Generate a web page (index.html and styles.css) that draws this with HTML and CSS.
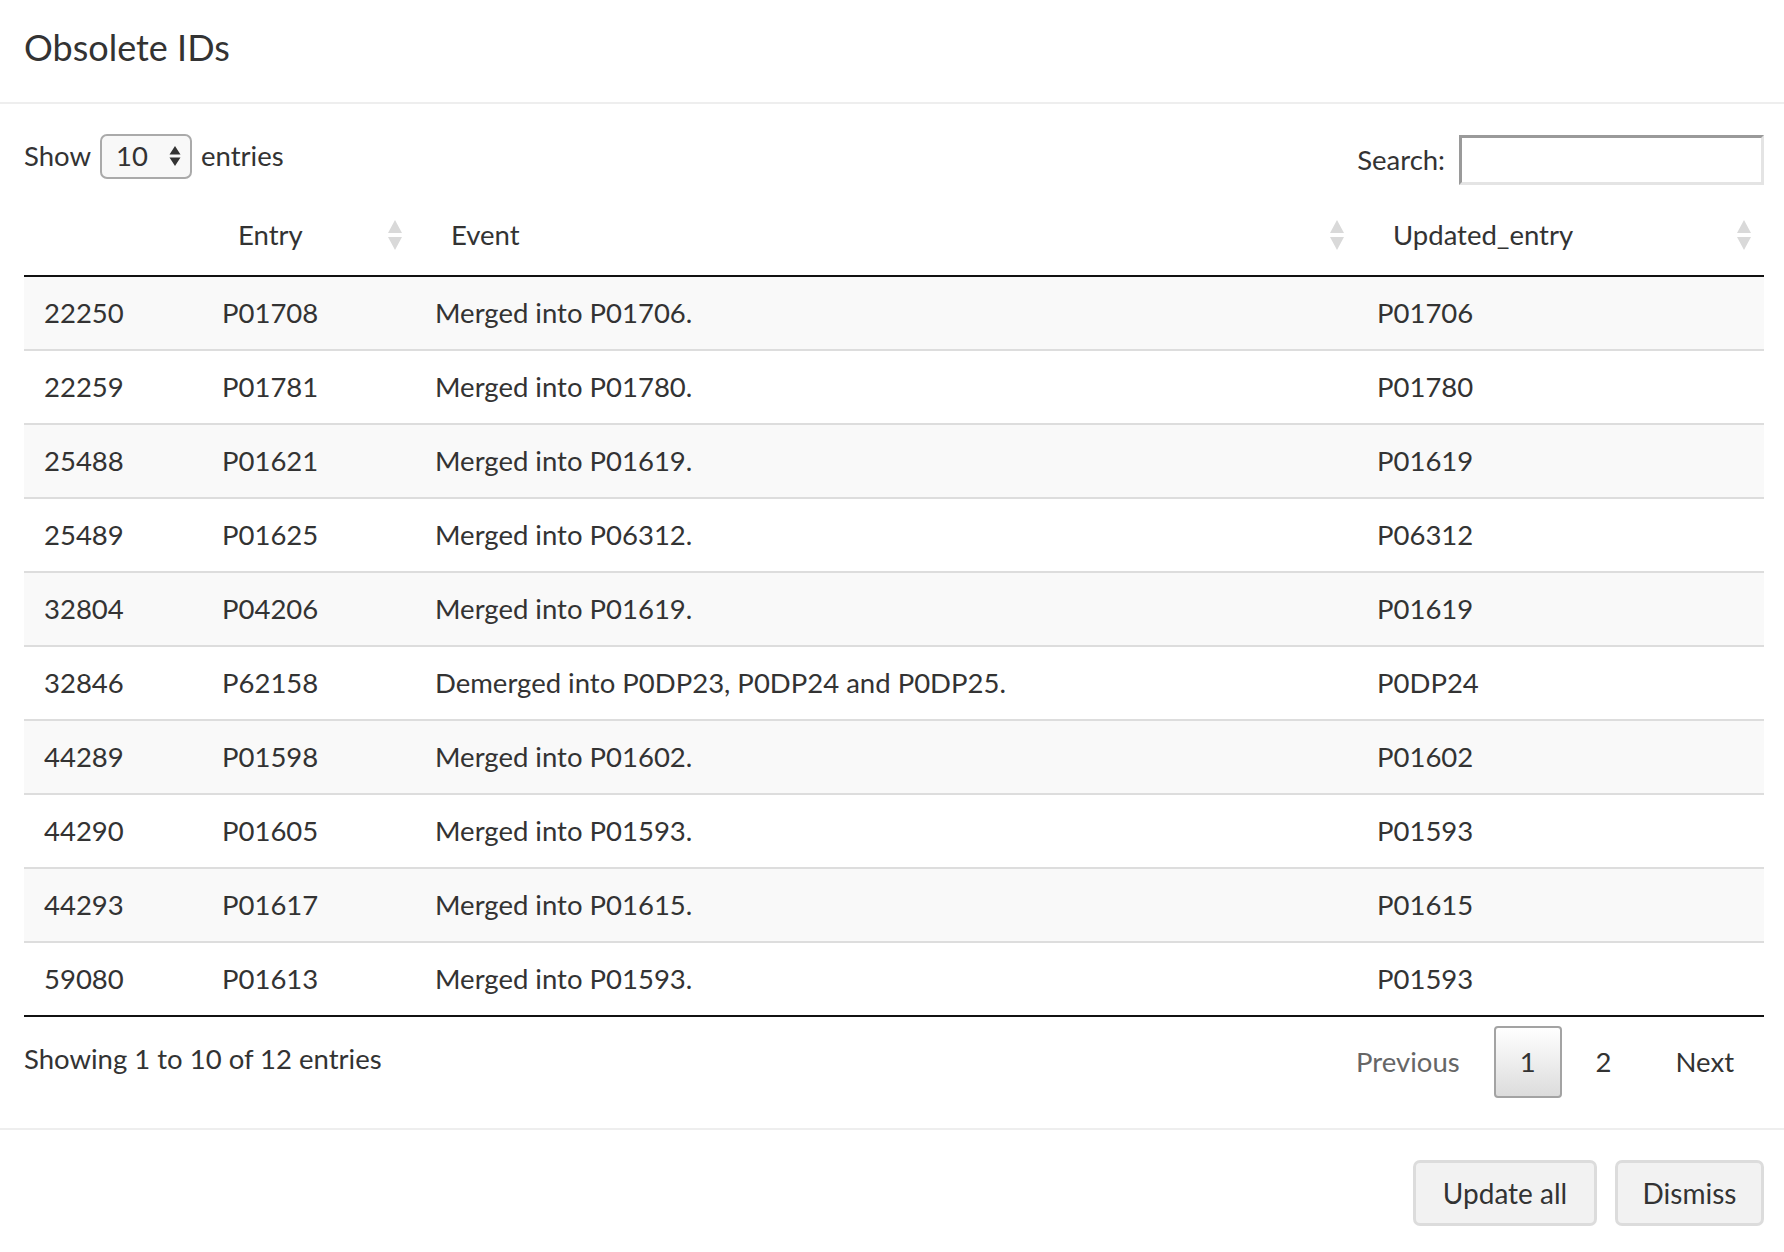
FILE: index.html
```html
<!DOCTYPE html>
<html lang="en">
<head>
<meta charset="utf-8">
<title>Obsolete IDs</title>
<link rel="stylesheet" href="styles.css">
</head>
<body>
<div class="modal">
  <div class="modal-header">
    <h4 class="modal-title">Obsolete IDs</h4>
  </div>
  <div class="modal-body">
    <div class="dt-top">
      <label class="dt-length">Show
        <span class="select"><span class="select-val">10</span>
          <svg class="select-arrows" width="12" height="22" viewBox="0 0 12 22"><path d="M6 1 L11.5 9.5 L0.5 9.5 Z M6 21 L11.5 12.5 L0.5 12.5 Z" fill="#333"/></svg>
        </span>
        entries</label>
      <label class="dt-search">Search: <span class="search-input"></span></label>
    </div>
    <table class="dt">
      <colgroup>
        <col class="c1"><col class="c2"><col class="c3"><col class="c4">
      </colgroup>
      <thead>
        <tr>
          <th class="nosort"></th>
          <th>Entry<svg class="sort" viewBox="0 0 16 30"><path d="M8 0 L15 13 L1 13 Z M8 30 L15 17 L1 17 Z" fill="#d9d9d9"/></svg></th>
          <th>Event<svg class="sort" viewBox="0 0 16 30"><path d="M8 0 L15 13 L1 13 Z M8 30 L15 17 L1 17 Z" fill="#d9d9d9"/></svg></th>
          <th>Updated_entry<svg class="sort" viewBox="0 0 16 30"><path d="M8 0 L15 13 L1 13 Z M8 30 L15 17 L1 17 Z" fill="#d9d9d9"/></svg></th>
        </tr>
      </thead>
      <tbody>
        <tr class="odd"><td>22250</td><td>P01708</td><td>Merged into P01706.</td><td>P01706</td></tr>
        <tr><td>22259</td><td>P01781</td><td>Merged into P01780.</td><td>P01780</td></tr>
        <tr class="odd"><td>25488</td><td>P01621</td><td>Merged into P01619.</td><td>P01619</td></tr>
        <tr><td>25489</td><td>P01625</td><td>Merged into P06312.</td><td>P06312</td></tr>
        <tr class="odd"><td>32804</td><td>P04206</td><td>Merged into P01619.</td><td>P01619</td></tr>
        <tr><td>32846</td><td>P62158</td><td>Demerged into P0DP23, P0DP24 and P0DP25.</td><td>P0DP24</td></tr>
        <tr class="odd"><td>44289</td><td>P01598</td><td>Merged into P01602.</td><td>P01602</td></tr>
        <tr><td>44290</td><td>P01605</td><td>Merged into P01593.</td><td>P01593</td></tr>
        <tr class="odd"><td>44293</td><td>P01617</td><td>Merged into P01615.</td><td>P01615</td></tr>
        <tr><td>59080</td><td>P01613</td><td>Merged into P01593.</td><td>P01593</td></tr>
      </tbody>
    </table>
    <div class="dt-bottom">
      <div class="dt-info">Showing 1 to 10 of 12 entries</div>
      <div class="dt-paginate">
        <span class="pg disabled">Previous</span>
        <span class="pg current">1</span>
        <span class="pg">2</span>
        <span class="pg">Next</span>
      </div>
    </div>
  </div>
  <div class="modal-footer">
    <button class="btn btn-update">Update all</button>
    <button class="btn btn-dismiss">Dismiss</button>
  </div>
</div>
</body>
</html>
```

FILE: styles.css
```css
html, body {
  margin: 0;
  padding: 0;
  background: #fff;
}
body {
  font-family: "Lato", "Noto Sans", sans-serif;
  font-size: 27.5px;
  line-height: 40px;
  color: #333;
}
.modal {
  width: 1784px;
  height: 1252px;
  display: flex;
  flex-direction: column;
}
.modal-header {
  height: 104px;
  border-bottom: 2px solid #eeeeee;
  padding: 0 24px;
  display: flex;
  align-items: center;
  box-sizing: border-box;
}
.modal-title {
  margin: 0;
  font-size: 36px;
  font-weight: normal;
  line-height: 44px;
  color: #333;
  margin-top: -9px;
}
.modal-body {
  padding: 29px 20px 30px 24px;
}
.dt-top {
  display: flex;
  justify-content: space-between;
  align-items: flex-start;
  height: 62px;
}
.dt-length {
  display: flex;
  align-items: center;
  height: 46px;
  gap: 9px;
}
.select {
  width: 92px;
  height: 45px;
  box-sizing: border-box;
  border: 2px solid #aaa;
  border-radius: 7px;
  background: #f8f8f8;
  display: flex;
  align-items: center;
  justify-content: space-between;
  padding: 0 9px 0 14px;
}
.select-val {
  line-height: 40px;
}
.select-arrows {
  display: block;
}
.dt-search {
  display: flex;
  align-items: center;
  gap: 14px;
  height: 50px;
  padding-top: 2px;
}
.search-input {
  width: 305px;
  height: 50px;
  box-sizing: border-box;
  border-style: solid;
  border-width: 3px;
  border-color: #9a9a9a #e4e4e4 #e4e4e4 #9a9a9a;
  background: #fff;
}
.dt {
  width: 1740px;
  border-collapse: separate;
  border-spacing: 0;
  table-layout: fixed;
  border-bottom: 2px solid #111;
}
.c1 { width: 178px; }
.c2 { width: 213px; }
.c3 { width: 942px; }
.c4 { width: 407px; }
.dt th {
  font-weight: normal;
  text-align: left;
  padding: 20px 36px 20px 36px;
  border-bottom: 2px solid #111;
  position: relative;
  height: 40px;
}
.dt th .sort {
  position: absolute;
  right: 12px;
  top: 50%;
  width: 16px;
  height: 30px;
  margin-top: -15px;
}
.dt td {
  padding: 16px 20px;
  border-top: 2px solid #dddddd;
  white-space: nowrap;
}
.dt tbody tr:first-child td {
  border-top: none;
}
.dt tr.odd td {
  background: #f9f9f9;
}
.dt-bottom {
  display: flex;
  justify-content: space-between;
  align-items: flex-start;
}
.dt-info {
  padding-top: 22px;
}
.dt-paginate {
  display: flex;
  align-items: center;
  padding-top: 9px;
}
.pg {
  display: block;
  padding: 14px 28px;
  border: 2px solid transparent;
  border-radius: 4px;
  margin-left: 4px;
  color: #333;
}
.pg.disabled {
  color: #666;
}
.pg.current {
  padding: 14px 24px;
  border-color: #a3a3a3;
  background: linear-gradient(to bottom, #ffffff 0%, #dcdcdc 100%);
}
.modal-footer {
  border-top: 2px solid #eeeeee;
  padding: 30px 20px 0 0;
  display: flex;
  justify-content: flex-end;
  gap: 18px;
}
.btn {
  font-family: inherit;
  font-size: 28px;
  line-height: 40px;
  color: #333;
  background: #f2f2f2;
  border: 3px solid #dcdcdc;
  border-radius: 7px;
  height: 66px;
  padding: 0;
  margin: 0;
  text-align: center;
}
.btn-update { width: 184px; }
.btn-dismiss { width: 149px; }
```
